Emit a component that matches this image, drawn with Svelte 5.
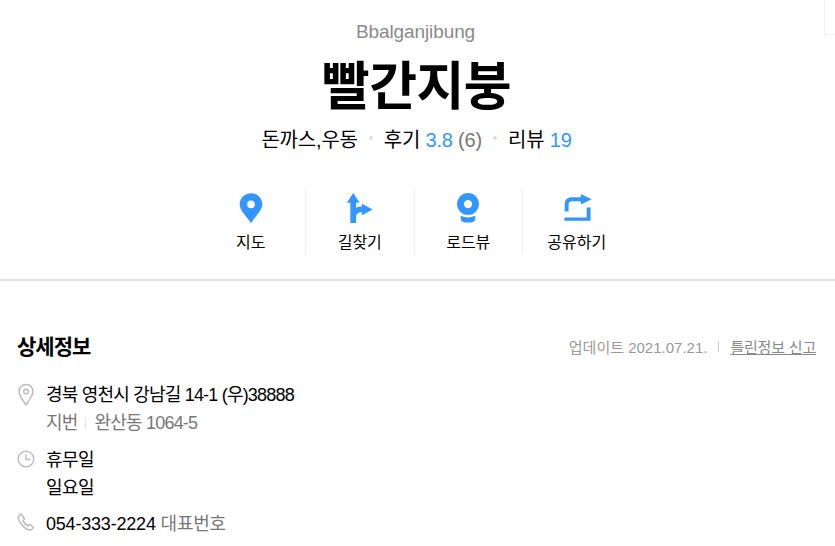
<script>
  const actions = [
    { label: '지도', icon: 'map' },
    { label: '길찾기', icon: 'route' },
    { label: '로드뷰', icon: 'road' },
    { label: '공유하기', icon: 'share' }
  ];
</script>

<div class="page">
  <div class="corner"></div>
  <header class="head">
    <p class="eng">Bbalganjibung</p>
    <h1>빨간지붕</h1>
    <div class="meta">
      <span>돈까스,우동</span>
      <i class="dot"></i>
      <span>후기 <b>3.8</b> <em>(6)</em></span>
      <i class="dot"></i>
      <span>리뷰 <b>19</b></span>
    </div>
    <nav class="actions">
      {#each actions as a}
        <div class="action">
          <svg class="aicon" width="32" height="32" viewBox="0 0 32 32" fill="#3396ff">
            {#if a.icon === 'map'}
              <path fill-rule="evenodd" d="M16 1.200C9.500 1.200 4.300 6.400 4.300 12.800c0 5.700 6.700 11.700 11.700 19.200 5-7.500 11.700-13.500 11.700-19.200C27.700 6.400 22.500 1.200 16 1.200zm0 7.700a3.900 3.900 0 1 1 0 7.800 3.900 3.900 0 0 1 0-7.800z"/>
            {:else if a.icon === 'route'}
              <path d="M9 1l6.500 10H12v5.500c1.500-1 3-1.500 6-1.500v-3l11 6-11 6v-3c-4 0-6 2-6 5v6H6V11H2.500z"/>
            {:else if a.icon === 'road'}
              <path fill-rule="evenodd" d="M16 1a11.300 11.300 0 1 0 0 22.600A11.300 11.300 0 0 0 16 1zm0 7.200a4.300 4.300 0 1 1 0 8.600 4.300 4.300 0 0 1 0-8.600z"/>
              <path d="M8.500 24.500Q16 28 23.500 24.500v3c0 2.500-2.500 4-5.500 4h-4c-3 0-5.500-1.500-5.500-4z"/>
            {:else}
              <path d="M20 2l11 5.500L20 13V9.500h-9c-2.500 0-3.700 1.500-3.700 3.500v7h-4v-7.500c0-4.500 3.200-7 7.200-7H20z"/>
              <path d="M3 26.300h23V16h4v13.700H3z"/>
            {/if}
          </svg>
          <span>{a.label}</span>
        </div>
      {/each}
    </nav>
  </header>

  <section class="detail">
    <div class="title-row">
      <h2>상세정보</h2>
      <div class="update">
        <span>업데이트 2021.07.21.</span>
        <i class="bar"></i>
        <a href="#report">틀린정보 신고</a>
      </div>
    </div>

    <div class="row addr">
      <svg class="ri pin" width="18" height="23" viewBox="0 0 18 23" fill="none" stroke="#bdbdbd" stroke-width="1.500">
        <path d="M9 21.800C5 16 2 12.500 2 8.500a7 7 0 0 1 14 0C16 12.500 13 16 9 21.800z"/>
        <circle cx="9" cy="8.500" r="2.300"/>
      </svg>
      <div class="rtext">
        <div class="l1">경북 영천시 강남길 14-1 (우)38888</div>
        <div class="l2"><span>지번</span><i class="sep"></i><span>완산동 1064-5</span></div>
      </div>
    </div>

    <div class="row hours">
      <svg class="ri" width="18" height="18" viewBox="0 0 18 18" fill="none" stroke="#bdbdbd" stroke-width="1.500">
        <circle cx="9" cy="9" r="7.800"/>
        <path d="M9 4.500V9.500H13.500"/>
      </svg>
      <div class="rtext ko-lines">
        <div class="l1">휴무일</div>
        <div class="l1">일요일</div>
      </div>
    </div>

    <div class="row phone">
      <svg class="ri" width="18" height="18" viewBox="0 0 18 18" fill="none" stroke="#bdbdbd" stroke-width="1.500">
        <path d="M4.500 1.200L2 2.800C.8 3.800 1.200 6.500 3.500 10c2.500 3.600 5.500 6.500 9 7 1.800.2 3-.5 4-2.500l-3.500-3-2 1.300C9 12 7.500 10.500 6 8l1.500-2z"/>
      </svg>
      <div class="rtext tel"><span class="num">054-333-2224</span> <span class="tag">대표번호</span></div>
    </div>
  </section>
</div>

<style>
  :global(body) {
    margin: 0;
    background: #fff;
  }
  .page {
    position: relative;
    width: 835px;
    height: 546px;
    overflow: hidden;
    background: #fff;
    font-family: "Liberation Sans", "Noto Sans CJK KR", sans-serif;
    color: #000;
  }
  .corner {
    position: absolute;
    right: -2px;
    top: -2px;
    width: 11px;
    height: 35px;
    border: 1px solid #f2f2f2;
  }
  .head {
    height: 281px;
    box-sizing: border-box;
    padding-top: 20px;
    text-align: center;
    border-bottom: 2px solid #e4e4e4;
  }
  .eng {
    margin: 0 4px 0 0;
    font-size: 19px;
    line-height: 24px;
    letter-spacing: -0.1px;
    color: #8a8a8a;
  }
  h1 {
    margin: 9px 0 0;
    font-size: 52px;
    line-height: 68px;
    font-weight: 700;
    letter-spacing: -0.5px;
    padding-right: 2px;
  }
  .meta {
    margin-top: 3px;
    height: 28px;
    display: flex;
    justify-content: center;
    align-items: center;
    gap: 11px;
    font-size: 20px;
    letter-spacing: -0.2px;
    padding-right: 2px;
  }
  .meta b {
    font-weight: 400;
    color: #3396ff;
  }
  .meta em {
    font-style: normal;
    color: #777;
  }
  .dot {
    width: 4px;
    height: 4px;
    border-radius: 50%;
    background: #ddd;
  }
  .actions {
    margin-top: 36px;
    margin-right: 8px;
    display: flex;
    justify-content: center;
  }
  .action {
    width: 108.5px;
    height: 66px;
    box-sizing: border-box;
    padding-top: 4px;
    display: flex;
    flex-direction: column;
    align-items: center;
    font-size: 16px;
    line-height: 22px;
    border-left: 1px solid #f0f0f0;
  }
  .action:first-child {
    border-left: 0;
  }
  .aicon {
    margin-bottom: 9px;
  }
  .detail {
    padding: 49px 19px 0 17px;
  }
  .title-row {
    display: flex;
    justify-content: space-between;
    align-items: center;
    height: 34px;
    margin-bottom: 17px;
  }
  h2 {
    margin: 0;
    font-size: 21px;
    line-height: 34px;
    font-weight: 700;
    letter-spacing: -1px;
  }
  .update {
    display: flex;
    align-items: center;
    gap: 11px;
    font-size: 15px;
    color: #999;
    margin-top: -2px;
  }
  .update a {
    color: #888;
    letter-spacing: -0.2px;
    text-decoration: underline;
  }
  .bar {
    width: 1px;
    height: 11px;
    background: #ccc;
  }
  .row {
    display: flex;
    gap: 21px;
  }
  .ri {
    flex: none;
    width: 18px;
    margin-right: -10px;
  }
  .rtext {
    font-size: 18px;
    line-height: 28px;
    letter-spacing: -0.8px;
  }
  .ko-lines {
    letter-spacing: -0.5px;
  }
  .addr .ri {
    margin-top: 2px;
  }
  .hours {
    margin-top: 9px;
  }
  .hours .ri {
    margin-top: 4px;
  }
  .phone {
    margin-top: 8px;
  }
  .phone .ri {
    margin-top: 3px;
  }
  .l2 {
    display: flex;
    align-items: center;
    color: #777;
  }
  .sep {
    width: 1px;
    height: 12px;
    margin: 0 9px 0 7px;
    background: #e5e5e5;
  }
  .tel {
    letter-spacing: -0.2px;
  }
  .num {
    color: #000;
  }
  .tag {
    color: #777;
  }
</style>
